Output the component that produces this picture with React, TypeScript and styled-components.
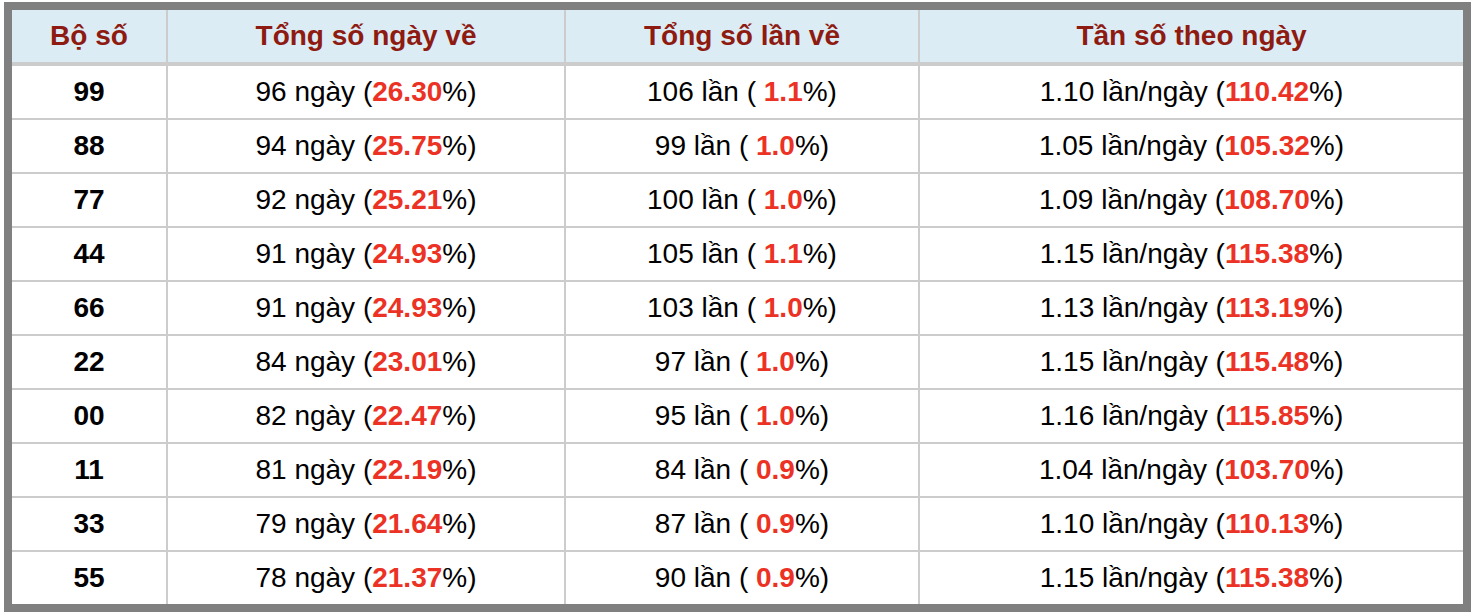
import React from "react";
import styled, { createGlobalStyle } from "styled-components";

const GlobalStyle = createGlobalStyle`
  body {
    margin: 0;
    background: #ffffff;
    font-family: "Liberation Sans", Arial, sans-serif;
  }
`;

const COLUMNS = "154px 396px 352px 543px";

const Frame = styled.div`
  width: 1451px;
  margin: 2px 0 0 4px;
  border: 8px solid #808080;
  background: #cccccc;
  display: flex;
  flex-direction: column;
  gap: 2px;
`;

const HeaderRow = styled.div`
  display: grid;
  grid-template-columns: ${COLUMNS};
  column-gap: 2px;
  margin-bottom: 2px;
`;

const HeadCell = styled.div`
  height: 52px;
  background: #dcecf5;
  color: #8e1b12;
  font-size: 28px;
  font-weight: 700;
  display: flex;
  align-items: center;
  justify-content: center;
`;

const Row = styled.div`
  display: grid;
  grid-template-columns: ${COLUMNS};
  column-gap: 2px;
`;

const Cell = styled.div<{ $bold?: boolean }>`
  height: 52px;
  background: #ffffff;
  color: #000000;
  font-size: 28px;
  font-weight: ${(p) => (p.$bold ? 700 : 400)};
  display: flex;
  align-items: center;
  justify-content: center;
  white-space: pre;
`;

const Hot = styled.span`
  color: #ec3224;
  font-weight: 700;
`;

interface IRow {
  pair: string;
  days: number;
  dayPct: string;
  times: number;
  timePct: string;
  rate: string;
  ratePct: string;
}

const rows: IRow[] = [
  { pair: "99", days: 96, dayPct: "26.30", times: 106, timePct: "1.1", rate: "1.10", ratePct: "110.42" },
  { pair: "88", days: 94, dayPct: "25.75", times: 99, timePct: "1.0", rate: "1.05", ratePct: "105.32" },
  { pair: "77", days: 92, dayPct: "25.21", times: 100, timePct: "1.0", rate: "1.09", ratePct: "108.70" },
  { pair: "44", days: 91, dayPct: "24.93", times: 105, timePct: "1.1", rate: "1.15", ratePct: "115.38" },
  { pair: "66", days: 91, dayPct: "24.93", times: 103, timePct: "1.0", rate: "1.13", ratePct: "113.19" },
  { pair: "22", days: 84, dayPct: "23.01", times: 97, timePct: "1.0", rate: "1.15", ratePct: "115.48" },
  { pair: "00", days: 82, dayPct: "22.47", times: 95, timePct: "1.0", rate: "1.16", ratePct: "115.85" },
  { pair: "11", days: 81, dayPct: "22.19", times: 84, timePct: "0.9", rate: "1.04", ratePct: "103.70" },
  { pair: "33", days: 79, dayPct: "21.64", times: 87, timePct: "0.9", rate: "1.10", ratePct: "110.13" },
  { pair: "55", days: 78, dayPct: "21.37", times: 90, timePct: "0.9", rate: "1.15", ratePct: "115.38" }
];

const App: React.FunctionComponent = () => {
  return (
    <>
      <GlobalStyle />
      <Frame>
        <HeaderRow>
          <HeadCell>Bộ số</HeadCell>
          <HeadCell>Tổng số ngày về</HeadCell>
          <HeadCell>Tổng số lần về</HeadCell>
          <HeadCell>Tần số theo ngày</HeadCell>
        </HeaderRow>
        {rows.map((r) => (
          <Row key={r.pair}>
            <Cell $bold>{r.pair}</Cell>
            <Cell>
              {r.days} ngày (<Hot>{r.dayPct}</Hot>%)
            </Cell>
            <Cell>
              {r.times} lần ( <Hot>{r.timePct}</Hot>%)
            </Cell>
            <Cell>
              {r.rate} lần/ngày (<Hot>{r.ratePct}</Hot>%)
            </Cell>
          </Row>
        ))}
      </Frame>
    </>
  );
};

export default App;
